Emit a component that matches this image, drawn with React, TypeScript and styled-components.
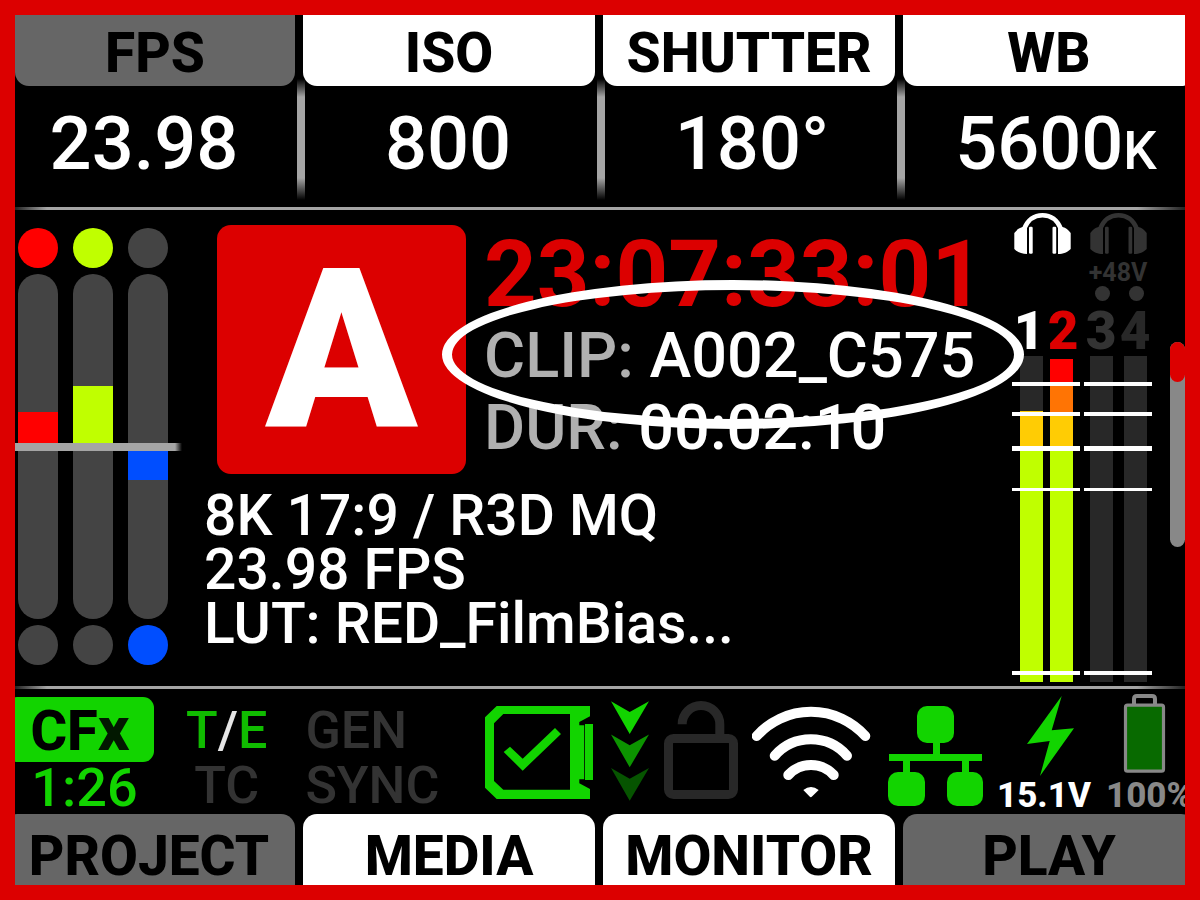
import React from "react";
import styled, { createGlobalStyle } from "styled-components";

const GlobalStyle = createGlobalStyle`
  *, *::before, *::after { box-sizing: border-box; }
  body { margin: 0; background: #000; font-family: Roboto, "Liberation Sans", sans-serif; }
  button { font-family: inherit; border: 0; margin: 0; cursor: pointer; }
  svg { display: block; flex: none; }
`;

const RED = "#dc0000";
const GREEN = "#12d400";
const LIME = "#c0ff00";
const TRACK = "#444";
const DIM = "#333";
const METER = "#282828";

const Screen = styled.main`
  min-height: 100vh;
  border: 15px solid ${RED};
  background: #000;
  color: #fff;
  overflow: hidden;
  white-space: nowrap;
`;

const TopTabs = styled.nav`
  display: grid;
  grid-template-columns: minmax(0, 280fr) repeat(3, minmax(0, 292fr));
  gap: 8px;
  margin-right: -10px;
`;

const BottomTabs = styled.nav`
  display: grid;
  grid-template-columns: repeat(4, minmax(0, 1fr));
  gap: 8px;
  margin: 0 -10px 0 -12px;
`;

const Tab = styled.button<{ $dim?: boolean; $edge: "top" | "bottom" }>`
  height: 71px;
  padding: ${(p) => (p.$edge === "top" ? "4px 0 0" : "12px 0 0")};
  border-radius: ${(p) => (p.$edge === "top" ? "0 0 14px 14px" : "14px 14px 0 0")};
  background: ${(p) => (p.$dim ? "#666" : "#fff")};
  color: #000;
  font-size: 55px;
  font-weight: 800;
  line-height: 56px;
`;

const Readouts = styled.section`
  display: grid;
  grid-template-columns: minmax(0, 1fr);
  height: 121px;
`;

const Dividers = styled.div`
  grid-area: 1 / 1;
  display: grid;
  grid-template-columns: minmax(0, 290fr) repeat(3, minmax(0, 300fr));
  margin: -7px -20px 9px 0;
`;

const Divider = styled.i`
  justify-self: end;
  width: 8px;
  background: linear-gradient(transparent, #a5a5a5 18px, #a5a5a5 calc(100% - 22px), transparent);
`;

const Values = styled.div`
  grid-area: 1 / 1;
  display: grid;
  grid-template-columns: repeat(4, minmax(0, 1fr));
  margin: 0 -23px;
`;

const Value = styled.output`
  text-align: center;
  font-size: 74px;
  font-weight: 500;
  line-height: 116px;
`;

const Unit = styled.small`
  font-size: 53px;
  font-weight: 500;
`;

const Rule = styled.hr`
  height: 3px;
  margin: 0;
  border: 0;
  background: linear-gradient(90deg, #222, #a5a5a5 32px, #a5a5a5 calc(100% - 48px), #222);
`;

const Body = styled.section`
  display: flex;
  height: 476px;
`;

const Levels = styled.div`
  position: relative;
  display: flex;
  gap: 15px;
  width: 167px;
  padding: 18px 0 0 3px;
`;

const Level = styled.div`
  display: flex;
  flex-direction: column;
  gap: 6px;
  width: 40px;
`;

const Lamp = styled.i<{ $color?: string }>`
  height: 40px;
  border-radius: 50%;
  background: ${(p) => p.$color ?? TRACK};
`;

const Capsule = styled.div`
  display: grid;
  grid-template-rows: 169px 8px 168px;
  border-radius: 20px;
  background: ${TRACK};
`;

const Fill = styled.i<{ $color: string; $below?: boolean; $size: number }>`
  grid-row: ${(p) => (p.$below ? 3 : 1)};
  align-self: ${(p) => (p.$below ? "start" : "end")};
  height: ${(p) => p.$size}px;
  background: ${(p) => p.$color};
`;

const Baseline = styled.i`
  position: absolute;
  left: 0;
  top: 233px;
  width: 167px;
  height: 8px;
  background: linear-gradient(90deg, #a5a5a5 calc(100% - 7px), transparent);
`;

const Info = styled.div`
  flex: 1;
  min-width: 0;
  padding: 15px 0 0 22px;
`;

const ClipBlock = styled.div`
  display: flex;
  gap: 18px;
  padding-left: 13px;
`;

const CameraLetter = styled.div`
  flex: none;
  width: 249px;
  height: 249px;
  border-radius: 14px;
  background: ${RED};
  font-size: 223px;
  font-weight: 900;
  line-height: 252px;
  text-align: center;
`;

const ClipText = styled.div`
  padding-top: 5px;
`;

const Timecode = styled.div`
  color: ${RED};
  font-size: 92px;
  font-weight: 700;
  line-height: 90px;
`;

const ClipLine = styled.div`
  position: relative;
  font-size: 63px;
  font-weight: 500;
  line-height: 72px;
`;

const Label = styled.span`
  color: #b0b0b0;
`;

const Highlight = styled.i`
  position: absolute;
  left: -42px;
  top: -40px;
  width: 582px;
  height: 149px;
  border: 10px solid #fff;
  border-radius: 50%;
  z-index: 1;
`;

const Format = styled.div`
  margin-top: 15px;
  font-size: 57px;
  font-weight: 500;
  line-height: 54px;
`;

const Audio = styled.div`
  display: flex;
  gap: 4px;
  width: 140px;
  padding-top: 3px;
`;

const Channels = styled.div<{ $align: "start" | "center" }>`
  display: flex;
  flex-direction: column;
  align-items: ${(p) => p.$align};
  width: 68px;
`;

const Phantom = styled.div`
  height: 47px;
  padding-top: 5px;
  color: ${DIM};
  font-size: 25px;
  font-weight: 700;
  line-height: 26px;
`;

const PhantomDots = styled.div`
  display: flex;
  justify-content: center;
  gap: 19px;
  padding-left: 3px;
`;

const Dot = styled.i`
  width: 15px;
  height: 15px;
  border-radius: 50%;
  background: ${DIM};
`;

const Numbers = styled.div`
  display: grid;
  grid-template-columns: 34px 34px;
  height: 54px;
  font-size: 53px;
  font-weight: 900;
  line-height: 58px;
  text-align: center;
`;

const ChannelNumber = styled.span<{ $color: string }>`
  color: ${(p) => p.$color};
`;

const Meters = styled.div<{ $gap: number }>`
  position: relative;
  display: flex;
  justify-content: center;
  gap: ${(p) => p.$gap}px;
  width: 68px;
  height: 326px;
`;

const Meter = styled.div`
  display: flex;
  flex-direction: column;
  width: 23px;
  background: ${METER};
`;

const Segment = styled.i<{ $color: string; $size: number }>`
  height: ${(p) => p.$size}px;
  background: ${(p) => p.$color};
`;

const Mark = styled.i<{ $top: number; $size: number }>`
  position: absolute;
  left: 0;
  right: 0;
  top: ${(p) => p.$top}px;
  height: ${(p) => p.$size}px;
  background: #fff;
`;

const Scroll = styled.div`
  width: 15px;
  height: 205px;
  margin: 132px 0 0 18px;
  border-radius: 8px;
  background: #888;
`;

const Thumb = styled.div`
  height: 40px;
  border-radius: 8px;
  background: ${RED};
`;

const Status = styled.section`
  display: flex;
  height: 125px;
`;

const Media = styled.div`
  flex: none;
  width: 139px;
  padding-top: 8px;
  text-align: center;
`;

const MediaName = styled.div`
  height: 65px;
  margin-left: -9px;
  border-radius: 11px;
  background: ${GREEN};
  color: #000;
  font-size: 56px;
  font-weight: 800;
  line-height: 68px;
`;

const MediaSuffix = styled.span`
  color: #021800;
  font-size: 62px;
  line-height: 48px;
`;

const MediaTime = styled.div`
  color: ${GREEN};
  font-size: 54px;
  font-weight: 500;
  line-height: 52px;
`;

const Sync = styled.div`
  flex: none;
  display: flex;
  width: 331px;
  padding: 14px 0 0 32px;
  gap: 38px;
  color: ${DIM};
  font-size: 52px;
  font-weight: 500;
  line-height: 55px;
`;

const SyncPair = styled.div<{ $center?: boolean }>`
  text-align: ${(p) => (p.$center ? "center" : "left")};
`;

const Locked = styled.span`
  color: #10bc00;
`;

const Slash = styled.span`
  color: #e6e6e6;
`;

const Icons = styled.div`
  display: flex;
  gap: 14px;
`;

const Power = styled.div<{ $color: string }>`
  color: ${(p) => p.$color};
  font-size: 35px;
  font-weight: 800;
  line-height: 34px;
`;

const HeadphonesIcon = ({ color }: { color: string }) => (
  <svg width="61" height="42" viewBox="-2 0 61 42" fill={color}>
    <path d="M10 16C14 6 21 2.2 28.5 2.2S43 6 47 16" fill="none" stroke={color} strokeWidth="4.4" />
    <path d="M13 13.5V41C8 41 3 39 0.3 36V20C3 16.500 5 15 8.500 14Z" />
    <path d="M44 13.500V41C49 41 54 39 56.700 36V20C54 16.500 52 15 48.500 14Z" />
    <rect x="15" y="13.700" width="3.700" height="27" rx="1.200" />
    <rect x="38.500" y="13.700" width="3.700" height="27" rx="1.200" />
  </svg>
);

const CardIcon = () => (
  <svg width="112" height="125" viewBox="0 0 112 125" fill={GREEN}>
    <path
      fillRule="evenodd"
      d="M11.700 17H105V27.300L94.300 33V36.300H99.200V90.300H94.300V94.300L105 100V110H11.700L0 98.700V28.300ZM18.300 25L9 34.300V92L18.300 100.700H85V25Z"
    />
    <rect x="100" y="35" width="8" height="56" />
    <path d="M18.700 63L25 57.700L37.700 69.700L70 39L76 45L37.700 81.700Z" />
  </svg>
);

const ArrowsIcon = () => (
  <svg width="39" height="125" viewBox="0 0 39 125">
    <path d="M0 12.300L18.700 23L38 12.300L18.700 45Z" fill={GREEN} />
    <path d="M0 45.600L18.700 56.300L38 45.600L18.700 78.300Z" fill="#0c9400" />
    <path d="M0 79L18.700 89.700L38 79L18.700 111.700Z" fill="#065400" />
  </svg>
);

const LockIcon = () => (
  <svg width="74" height="125" viewBox="0 0 74 125" fill="none" stroke="#282828" strokeWidth="9">
    <rect x="4.500" y="49.500" width="65" height="56" rx="5" />
    <path d="M18.200 35.300A18.800 18.800 0 0 1 55.800 35.300V47" />
  </svg>
);

const WifiIcon = () => (
  <svg width="122" height="125" viewBox="0 0 122 125" fill="none" stroke="#fff" strokeWidth="10" strokeLinecap="round">
    <path d="M4.700 47A73 73 0 0 1 113.300 47" />
    <path d="M22.700 66.700A48 48 0 0 1 95 66.700" />
    <path d="M36.300 86A31 31 0 0 1 81.700 86" />
    <path d="M51.300 101Q59 95 66.700 101L60 107.500Q58.900 109 57.600 107.500Z" fill="#fff" stroke="none" />
  </svg>
);

const NetworkIcon = () => (
  <svg width="95" height="125" viewBox="0 0 95 125" fill={GREEN}>
    <rect x="29" y="17" width="37" height="37" rx="10" />
    <rect x="0" y="83" width="37" height="34" rx="10" />
    <rect x="59" y="83" width="36" height="34" rx="10" />
    <path d="M45 53H52V65H94V72H81V84H74V72H22V84H15V72H1V65H45Z" />
  </svg>
);

const BoltIcon = () => (
  <svg width="95" height="90" viewBox="0 0 95 90" fill={GREEN}>
    <path d="M64.700 7L54.700 41.300L77 39.300L43 87L52.700 52L30 55Z" />
  </svg>
);

const BatteryIcon = () => (
  <svg width="77" height="90" viewBox="0 0 77 90">
    <path d="M28 16V10Q28 7 31 7H46Q49 7 49 10V16" fill="none" stroke="#888" strokeWidth="4" />
    <rect x="19.500" y="16.200" width="38" height="66" rx="2" fill="#086a00" stroke="#888" strokeWidth="3.200" />
  </svg>
);

const marks = [
  [26, 4],
  [56, 4],
  [90, 5],
  [132, 3],
  [315, 4],
];

const Marks = () => (
  <>
    {marks.map(([top, size]) => (
      <Mark key={top} $top={top} $size={size} />
    ))}
  </>
);

export default function App() {
  return (
    <>
      <GlobalStyle />
      <Screen>
        <TopTabs>
          <Tab $edge="top" $dim>FPS</Tab>
          <Tab $edge="top">ISO</Tab>
          <Tab $edge="top">SHUTTER</Tab>
          <Tab $edge="top">WB</Tab>
        </TopTabs>
        <Readouts>
          <Dividers>
            <Divider />
            <Divider />
            <Divider />
          </Dividers>
          <Values>
            <Value>23.98</Value>
            <Value>800</Value>
            <Value>180°</Value>
            <Value>5600<Unit>K</Unit></Value>
          </Values>
        </Readouts>
        <Rule />
        <Body>
          <Levels>
            <Level>
              <Lamp $color="#f00" />
              <Capsule><Fill $color="#f00" $size={31} /></Capsule>
              <Lamp />
            </Level>
            <Level>
              <Lamp $color={LIME} />
              <Capsule><Fill $color={LIME} $size={57} /></Capsule>
              <Lamp />
            </Level>
            <Level>
              <Lamp />
              <Capsule><Fill $color="#004eff" $size={29} $below /></Capsule>
              <Lamp $color="#004eff" />
            </Level>
            <Baseline />
          </Levels>
          <Info>
            <ClipBlock>
              <CameraLetter>A</CameraLetter>
              <ClipText>
                <Timecode>23:07:33:01</Timecode>
                <ClipLine><Label>CLIP:</Label> A002_C575<Highlight /></ClipLine>
                <ClipLine><Label>DUR:</Label> 00:02:10</ClipLine>
              </ClipText>
            </ClipBlock>
            <Format>
              <div>8K 17:9 / R3D MQ</div>
              <div>23.98 FPS</div>
              <div>LUT: RED_FilmBias...</div>
            </Format>
          </Info>
          <Audio>
            <Channels $align="start">
              <HeadphonesIcon color="#fff" />
              <Phantom />
              <Numbers>
                <ChannelNumber $color="#fff">1</ChannelNumber>
                <ChannelNumber $color={RED}>2</ChannelNumber>
              </Numbers>
              <Meters $gap={7}>
                <Meter>
                  <Segment $color={METER} $size={55} />
                  <Segment $color="#ffcc04" $size={36} />
                  <Segment $color={LIME} $size={235} />
                </Meter>
                <Meter>
                  <Segment $color="#000" $size={3} />
                  <Segment $color="#f00" $size={25} />
                  <Segment $color="#ff7404" $size={29} />
                  <Segment $color="#ffcc04" $size={34} />
                  <Segment $color={LIME} $size={235} />
                </Meter>
                <Marks />
              </Meters>
            </Channels>
            <Channels $align="center">
              <HeadphonesIcon color={DIM} />
              <Phantom>
                +48V
                <PhantomDots><Dot /><Dot /></PhantomDots>
              </Phantom>
              <Numbers>
                <ChannelNumber $color={DIM}>3</ChannelNumber>
                <ChannelNumber $color={METER}>4</ChannelNumber>
              </Numbers>
              <Meters $gap={11}>
                <Meter />
                <Meter />
                <Marks />
              </Meters>
            </Channels>
          </Audio>
          <Scroll><Thumb /></Scroll>
        </Body>
        <Rule />
        <Status>
          <Media>
            <MediaName>CF<MediaSuffix>x</MediaSuffix></MediaName>
            <MediaTime>1:26</MediaTime>
          </Media>
          <Sync>
            <SyncPair $center>
              <div><Locked>T</Locked><Slash>/</Slash><Locked>E</Locked></div>
              <div>TC</div>
            </SyncPair>
            <SyncPair>
              <div>GEN</div>
              <div>SYNC</div>
            </SyncPair>
          </Sync>
          <Icons>
            <CardIcon />
            <ArrowsIcon />
            <LockIcon />
            <WifiIcon />
            <NetworkIcon />
            <Power $color="#fff"><BoltIcon />15.1V</Power>
            <Power $color="#888"><BatteryIcon />100%</Power>
          </Icons>
        </Status>
        <BottomTabs>
          <Tab $edge="bottom" $dim>PROJECT</Tab>
          <Tab $edge="bottom">MEDIA</Tab>
          <Tab $edge="bottom">MONITOR</Tab>
          <Tab $edge="bottom" $dim>PLAY</Tab>
        </BottomTabs>
      </Screen>
    </>
  );
}
